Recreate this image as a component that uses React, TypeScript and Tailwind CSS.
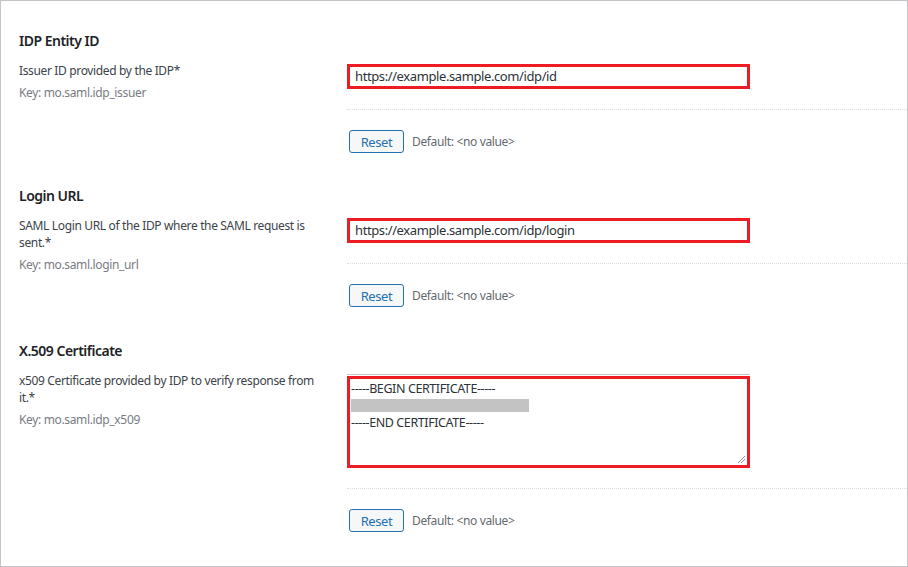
import React from "react";

const font = { fontFamily: '"Noto Sans", "Open Sans", sans-serif' };

function ResetRow() {
  return (
    <div className="flex items-center">
      <button className="h-[23px] w-[55px] rounded-[3px] border border-[#2271b1] bg-[#f6f7f7] pt-[1px] text-[13px] leading-none tracking-[-0.4px] text-[#2271b1]">
        Reset
      </button>
      <span className="ml-[8px] text-[12px] tracking-[-0.35px] text-[#646970]">Default: &lt;no value&gt;</span>
    </div>
  );
}

function Section({
  title,
  desc,
  keyName,
  children,
  gap,
}: {
  title: string;
  desc: React.ReactNode;
  keyName: string;
  children: React.ReactNode;
  gap: string;
}) {
  return (
    <div className={gap}>
      <div className="pl-[18px] text-[14px] font-semibold leading-[20px] tracking-[-0.5px] text-[#1d2327]">{title}</div>
      <div className="mt-[11px] flex">
        <div className="w-[346px] shrink-0 pl-[18px]">
          <div className="whitespace-nowrap text-[12px] leading-[17px] tracking-[-0.35px] text-[#3c434a]">{desc}</div>
          <div className="mt-[5px] text-[12px] leading-[17px] tracking-[-0.35px] text-[#787c82]">Key: {keyName}</div>
        </div>
        <div className="flex-1">
          {children}
          <div className="mt-[20px] border-t border-dotted border-[#dcdcde]" />
          <div className="mt-[20px] pl-[2px]">
            <ResetRow />
          </div>
        </div>
      </div>
    </div>
  );
}

export default function App() {
  return (
    <div className="h-[567px] w-[908px] overflow-hidden border border-[#c3c4c7] bg-white" style={font}>
      <div className="pt-[30px]">
        <Section
          gap=""
          title="IDP Entity ID"
          desc="Issuer ID provided by the IDP*"
          keyName="mo.saml.idp_issuer"
        >
          <div className="mt-[2px] flex h-[25px] w-[403px] items-center border-[3px] border-[#ed1c24] pl-[5px] text-[13px] tracking-[-0.4px] text-[#2c3338]">
            https://example.sample.com/idp/id
          </div>
        </Section>
        <Section
          gap="mt-[33px]"
          title="Login URL"
          desc={
            <>
              SAML Login URL of the IDP where the SAML request is
              <br />
              sent.*
            </>
          }
          keyName="mo.saml.login_url"
        >
          <div className="mt-[1px] flex h-[25px] w-[403px] items-center border-[3px] border-[#ed1c24] pl-[5px] text-[13px] tracking-[-0.4px] text-[#2c3338]">
            https://example.sample.com/idp/login
          </div>
        </Section>
        <Section
          gap="mt-[34px]"
          title="X.509 Certificate"
          desc={
            <>
              x509 Certificate provided by IDP to verify response from
              <br />
              it.*
            </>
          }
          keyName="mo.saml.idp_x509"
        >
          <div className="mt-[2px] h-[1px] w-[403px] bg-[#c3c4c7]" />
          <div className="relative mt-[1px] h-[92px] w-[403px] border-[3px] border-[#ed1c24] pl-[1px] pt-[1px] text-[12.5px] leading-[17px] tracking-[-0.4px] text-[#2c3338]">
            <div>-----BEGIN CERTIFICATE-----</div>
            <div className="my-[2px] h-[13px] w-[178px] bg-[#c3c3c3]" />
            <div>-----END CERTIFICATE-----</div>
            <svg className="absolute bottom-[1px] right-[1px]" width="9" height="9" viewBox="0 0 9 9">
              <line x1="1" y1="8" x2="8" y2="1" stroke="#8c8f94" strokeWidth="1" />
              <line x1="4" y1="8" x2="8" y2="4" stroke="#8c8f94" strokeWidth="1" />
            </svg>
          </div>
        </Section>
      </div>
    </div>
  );
}
